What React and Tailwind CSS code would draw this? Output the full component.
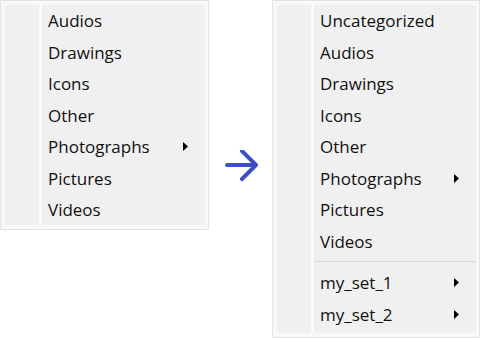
const MenuItem = ({ label, sub }) => (
  <div className="flex h-[31.5px] items-center justify-between pl-[6px] pr-[17px]">
    <span>{label}</span>
    {sub && (
      <svg width="5" height="9" viewBox="0 0 5 9" className="block">
        <path d="M0 0 L5 4.5 L0 9 Z" fill="#000" />
      </svg>
    )}
  </div>
);

const Menu = ({ items, sets, className }) => (
  <div
    className={`flex border border-[#e4e4e4] bg-[#f8f8f8] pt-[4px] pl-[4px] pr-[3px] pb-[4px] ${className}`}
  >
    <div className="w-[34px] shrink-0 bg-[#f0f0f0]" />
    <div className="w-[3px] shrink-0 bg-[#fbfbfb]" />
    <div className="flex-1 bg-[#f0f0f0]">
      {items.map((it) => (
        <MenuItem key={it} label={it} sub={it === "Photographs"} />
      ))}
      {sets && (
        <>
          <div className="flex h-[10px] items-start pt-[4px]">
            <div className="h-px w-full bg-[#d8d8d8]" />
          </div>
          {sets.map((s) => (
            <MenuItem key={s} label={s} sub />
          ))}
        </>
      )}
    </div>
  </div>
);

export default function App() {
  const base = ["Audios", "Drawings", "Icons", "Other", "Photographs", "Pictures", "Videos"];
  return (
    <div
      className="flex h-[338px] w-[480px] items-start bg-white text-[17px] text-[#111]"
      style={{ fontFamily: '"Open Sans", "Noto Sans", sans-serif' }}
    >
      <Menu items={base} className="h-[230px] w-[209px]" />
      <div className="flex w-[63px] justify-center pt-[150px]">
        <svg width="34" height="32" viewBox="0 0 34 32" className="ml-[2px]">
          <path
            d="M2 15 H31 M17 1 L31 15 L17 29"
            stroke="#3d4ec7"
            strokeWidth="4"
            strokeLinecap="round"
            strokeLinejoin="round"
            fill="none"
          />
        </svg>
      </div>
      <Menu
        items={["Uncategorized", ...base]}
        sets={["my_set_1", "my_set_2"]}
        className="h-[338px] w-[208px]"
      />
    </div>
  );
}
